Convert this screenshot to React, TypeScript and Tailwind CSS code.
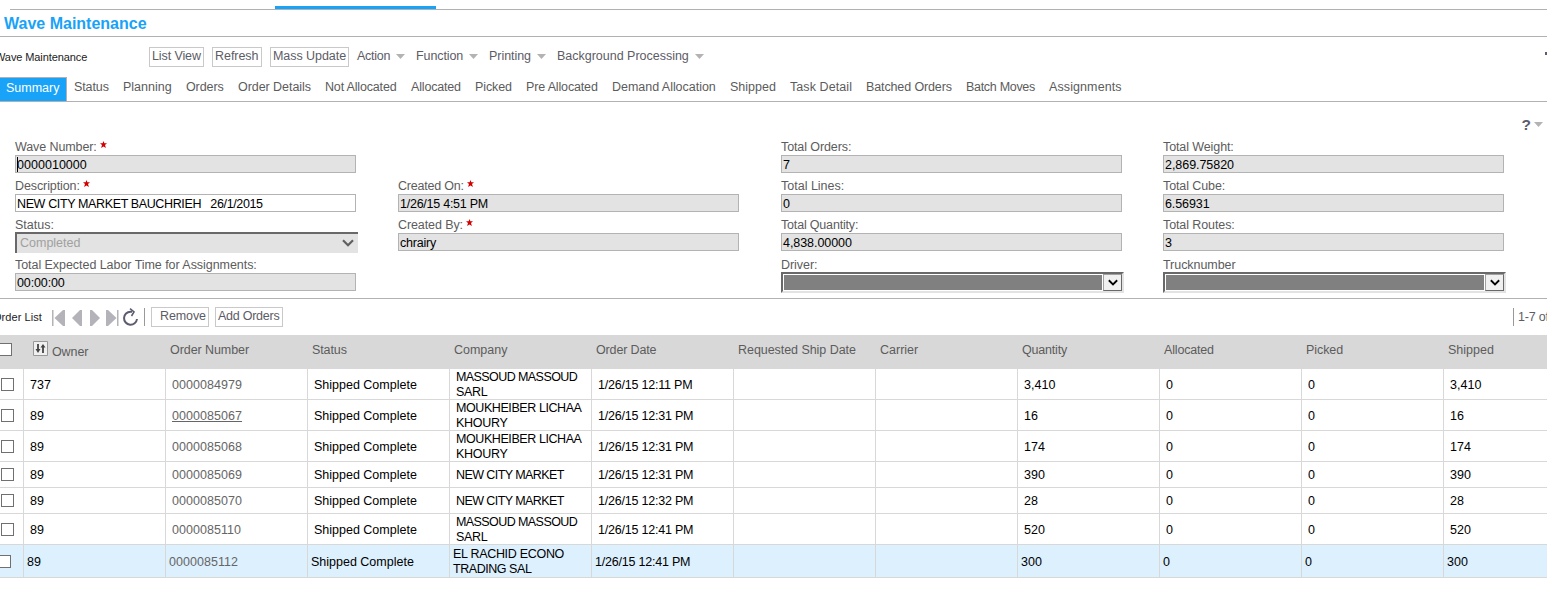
import React from "react";

const tabs: [string, string][] = [
  ["Status", "w-[35px] tracking-[-0.1px]"],
  ["Planning", "w-[49px] tracking-[0px]"],
  ["Orders", "w-[38px] tracking-[-0.1px]"],
  ["Order Details", "w-[73px] tracking-[-0.05px]"],
  ["Not Allocated", "w-[72px] tracking-[-0.17px]"],
  ["Allocated", "w-[50px] tracking-[-0.17px]"],
  ["Picked", "w-[37px] tracking-[-0.1px]"],
  ["Pre Allocated", "w-[72px] tracking-[-0.15px]"],
  ["Demand Allocation", "w-[104px] tracking-[-0.03px]"],
  ["Shipped", "w-[46px] tracking-[0px]"],
  ["Task Detail", "w-[62px] tracking-[0.08px]"],
  ["Batched Orders", "w-[86px] tracking-[-0.12px]"],
  ["Batch Moves", "w-[69px] tracking-[-0.3px]"],
  ["Assignments", "w-[73px] tracking-[0.1px]"],
];

const menus: [string, string][] = [
  ["Action", "w-[59px] tracking-[-0.25px]"],
  ["Function", "w-[73px] tracking-[-0.1px]"],
  ["Printing", "w-[68px] tracking-[-0.05px]"],
  ["Background Processing", "w-[158px] tracking-[-0.01px]"],
];

const columns: [string, string][] = [
  ["Order Number", "tracking-[-0.07px]"],
  ["Status", "tracking-[-0.1px]"],
  ["Company", "tracking-[-0.02px]"],
  ["Order Date", "tracking-[-0.15px]"],
  ["Requested Ship Date", "tracking-[-0.05px]"],
  ["Carrier", "tracking-[0px]"],
  ["Quantity", "tracking-[-0.2px]"],
  ["Allocated", "tracking-[-0.17px]"],
  ["Picked", "tracking-[-0.07px]"],
  ["Shipped", "tracking-[0px]"],
];

type Order = {
  owner: string;
  number: string;
  company: string[];
  date: string;
  qty: string;
  height: string;
  underline?: boolean;
  selected?: boolean;
};

const orders: Order[] = [
  { owner: "737", number: "0000084979", company: ["MASSOUD MASSOUD", "SARL"], date: "1/26/15 12:11 PM", qty: "3,410", height: "h-[31px]" },
  { owner: "89", number: "0000085067", company: ["MOUKHEIBER LICHAA", "KHOURY"], date: "1/26/15 12:31 PM", qty: "16", height: "h-[31px]", underline: true },
  { owner: "89", number: "0000085068", company: ["MOUKHEIBER LICHAA", "KHOURY"], date: "1/26/15 12:31 PM", qty: "174", height: "h-[31px]" },
  { owner: "89", number: "0000085069", company: ["NEW CITY MARKET"], date: "1/26/15 12:31 PM", qty: "390", height: "h-[26px]" },
  { owner: "89", number: "0000085070", company: ["NEW CITY MARKET"], date: "1/26/15 12:32 PM", qty: "28", height: "h-[26px]" },
  { owner: "89", number: "0000085110", company: ["MASSOUD MASSOUD", "SARL"], date: "1/26/15 12:41 PM", qty: "520", height: "h-[31px]" },
  { owner: "89", number: "0000085112", company: ["EL RACHID ECONO", "TRADING SAL"], date: "1/26/15 12:41 PM", qty: "300", height: "h-[33px]", selected: true },
];

function companyTracking(line: string) {
  if (line.startsWith("MOUK")) return "tracking-[-0.42px]";
  if (line.startsWith("MASS") || line.startsWith("NEW")) return "tracking-[-0.58px]";
  if (line.startsWith("TRAD")) return "tracking-[-0.45px]";
  return "tracking-[-0.3px]";
}

function Label({ text, required, className = "" }: { text: string; required?: boolean; className?: string }) {
  return (
    <div className={`flex items-end pb-px leading-[14px] text-[#5c5c5c] ${className || "h-[21px] tracking-[-0.1px]"}`}>
      <span>{text}</span>
      {required && (
        <svg width="7" height="7" viewBox="0 0 7 7" className="mb-[6px] ml-[3px] fill-[#d40000]">
          <path d="M3.500 0 4.400 2.200H7L5 4.100 5.900 7 3.500 5.400 1.100 7 2 4.100 0 2.200h2.600z" />
        </svg>
      )}
    </div>
  );
}

function Field(props: { label: string; value: string; required?: boolean; editable?: boolean; caret?: boolean; valueClass?: string; labelClass?: string }) {
  return (
    <div>
      <Label text={props.label} required={props.required} className={props.labelClass} />
      <div
        className={`flex h-[18px] w-[341px] items-center border border-[#b3b3b3] pl-px leading-[16px] whitespace-pre text-black ${props.editable ? "bg-white" : "bg-[#e3e3e3]"} ${props.valueClass ?? "tracking-[0.03px]"}`}
      >
        {props.caret && <span className="-mr-px h-[15px] w-px bg-black" />}
        <span className="pt-[2px]">{props.value}</span>
      </div>
    </div>
  );
}

function Chevron({ className }: { className: string }) {
  return (
    <svg viewBox="0 0 12 8" fill="none" strokeWidth="2.2" className={className}>
      <path d="M1 1.300 6 6.300 11 1.300" />
    </svg>
  );
}

function DarkSelect({ label }: { label: string }) {
  return (
    <div>
      <Label text={label} className="h-[21px] tracking-[-0.05px]" />
      <div className="-mt-px flex h-[21px] w-[343px] border-2 border-[#696969] border-r-[#e3e3e3] border-b-[#e3e3e3] bg-white">
        <div className="m-px mr-0 mb-0 h-[15px] w-[318px] bg-[#808080]" />
        <div className="ml-px flex h-[17px] w-[19px] items-center justify-center border border-[#a0a0a0] border-r-[#696969] border-b-[#696969] bg-[#f0f0f0]">
          <Chevron className="h-[7px] w-[10px] stroke-black" />
        </div>
      </div>
    </div>
  );
}

function Triangle() {
  return (
    <svg width="9" height="5" viewBox="0 0 9 5" className="fill-[#b3b3b3]">
      <path d="M0 0h9L4.500 5z" />
    </svg>
  );
}

function Button({ text, className }: { text: string; className: string }) {
  return (
    <div className={`h-5 border border-[#c9c9c9] leading-[17px] text-[#5c5c66] ${className}`}>{text}</div>
  );
}

function Checkbox({ className = "" }: { className?: string }) {
  return <div className={`h-[13px] w-[13px] shrink-0 border border-[#707070] bg-white ${className}`} />;
}

function Cell({ children, className = "" }: { children?: React.ReactNode; className?: string }) {
  return (
    <div className={`flex w-[142px] shrink-0 items-center border-r border-[#d8d8d8] pt-[2px] ${className}`}>{children}</div>
  );
}

function OrderRow({ o }: { o: Order }) {
  const pad = o.selected ? "pl-[3px]" : "pl-[6px]";
  const digits = `${pad} tracking-[0.05px]`;
  return (
    <div className={`flex w-[1586px] border-b border-[#d8d8d8] leading-[15px] text-black ${o.height} ${o.selected ? "bg-[#ddf0fe]" : ""}`}>
      <div className="flex w-6 shrink-0 items-center border-r border-[#d8d8d8]">
        <Checkbox className={o.selected ? "-ml-[2px]" : "ml-px"} />
      </div>
      <Cell className={digits}>{o.owner}</Cell>
      <Cell className={digits}>
        <span className={`text-[#666] ${o.underline ? "underline" : ""}`}>{o.number}</span>
      </Cell>
      <Cell className={pad}>Shipped Complete</Cell>
      <Cell className={pad}>
        <div>
          {o.company.map((line) => (
            <div key={line} className={companyTracking(line)}>{line}</div>
          ))}
        </div>
      </Cell>
      <Cell className={`${pad} tracking-[-0.21px]`}>{o.date}</Cell>
      <Cell />
      <Cell />
      <Cell className={digits}>{o.qty}</Cell>
      <Cell className={pad}>0</Cell>
      <Cell className={pad}>0</Cell>
      <Cell className={digits}>{o.qty}</Cell>
    </div>
  );
}

export default function App() {
  return (
    <div className="h-[589px] w-[1547px] overflow-hidden bg-white font-['Liberation_Sans',Arial,sans-serif] text-[12.5px] whitespace-nowrap">
      <div className="ml-[10px] flex h-[10px] items-end border-b border-[#b1b1b1]">
        <div className="ml-[265px] h-[3px] w-[161px] bg-[#18a2f8]" />
      </div>
      <div className="h-[27px] border-b border-[#b1b1b1] pl-1 text-[16px] leading-[27px] font-bold text-[#18a2f8]">
        Wave Maintenance
      </div>

      <div className="flex h-10 pt-[10px] text-[#5c5c66]">
        <div className="-ml-[5px] w-[154px] pt-[2px] text-[11px] leading-[17px] tracking-[-0.1px] text-[#222]">Wave Maintenance</div>
        <Button text="List View" className="w-[55px] pl-[2px] tracking-[-0.1px]" />
        <Button text="Refresh" className="ml-2 w-[50px] pl-[2px] tracking-[-0.05px]" />
        <Button text="Mass Update" className="ml-2 w-[79px] pl-[2px] tracking-[-0.05px]" />
        <div className="ml-2 flex h-[18px] items-center">
          {menus.map(([name, cls]) => (
            <div key={name} className={`flex items-center justify-between pr-[11px] ${cls}`}>
              <span>{name}</span>
              <Triangle />
            </div>
          ))}
        </div>
        <div className="mt-[5px] ml-auto h-[3px] w-[2px] bg-[#5c5c70]" />
      </div>

      <div className="flex h-[25px] border-b border-[#b1b1b1]">
        <div className="h-6 w-[67px] border-t border-r border-[#b1b1b1] bg-[#18a2f8] pl-[6px] leading-[20px] text-white">
          Summary
        </div>
        <div className="ml-[7px] flex gap-[14px] leading-5 text-[#5c5c5c]">
          {tabs.map(([name, cls]) => (
            <div key={name} className={cls}>{name}</div>
          ))}
        </div>
      </div>

      <div className="flex h-8 items-start justify-end pt-[14px] pr-1">
        <span className="text-[15.5px] leading-[18px] font-bold text-[#5c5c70]">?</span>
        <span className="mt-[6px] ml-[3px] flex"><Triangle /></span>
      </div>

      <div className="flex h-[165px] border-b border-[#b1b1b1] pl-[15px]">
        <div className="w-[383px]">
          <Field label="Wave Number:" value="0000010000" required caret />
          <Field label="Description:" value="NEW CITY MARKET BAUCHRIEH   26/1/2015" required editable valueClass="tracking-[-0.37px]" />
          <Label text="Status:" className="h-[21px]" />
          <div className="-mt-px flex h-[21px] w-[343px] items-center justify-between border-t-2 border-l-2 border-[#696969] bg-[#e3e3e3] pr-[4px] pb-px pl-[3px] text-[#a0a0a0]">
            <span>Completed</span>
            <Chevron className="h-[8px] w-[12px] stroke-[#606060]" />
          </div>
          <Field
            label="Total Expected Labor Time for Assignments:"
            value="00:00:00"
            labelClass="h-[20px] tracking-[-0.05px]"
            valueClass="tracking-[-0.12px]"
          />
        </div>
        <div className="w-[383px] pt-[39px]">
          <Field label="Created On:" value="1/26/15 4:51 PM" required labelClass="h-[21px] tracking-[-0.2px]" valueClass="tracking-[-0.25px]" />
          <Field label="Created By:" value="chrairy" required valueClass="tracking-[-0.2px]" />
        </div>
        <div className="w-[382px]">
          <Field label="Total Orders:" value="7" />
          <Field label="Total Lines:" value="0" labelClass="h-[21px]" />
          <Field label="Total Quantity:" value="4,838.00000" labelClass="h-[21px] tracking-[-0.18px]" valueClass="tracking-[-0.06px]" />
          <div className="h-px" />
          <DarkSelect label="Driver:" />
        </div>
        <div>
          <Field label="Total Weight:" value="2,869.75820" valueClass="tracking-[-0.05px]" />
          <Field label="Total Cube:" value="6.56931" valueClass="tracking-[-0.1px]" />
          <Field label="Total Routes:" value="3" />
          <div className="h-px" />
          <DarkSelect label="Trucknumber" />
        </div>
      </div>

      <div className="flex h-9 pt-2">
        <div className="-ml-[7px] w-[59px] pt-[2px] text-[11px] leading-[17px] tracking-[0.05px] text-[#222]">Order List</div>
        <svg width="92" height="22" viewBox="0 0 92 22" className="shrink-0">
          <g fill="#b3b3b9">
            <path d="M0 3h1.500v16H0zM13 3v16h-2L2.500 11 11 3zM30 3v16h-2L20 11 28 3zM38 3h2l8 8-8 8h-2zM54 3h2l8.500 8-8.500 8h-2zM65 3h1.500v16H65z" />
          </g>
          <path d="M80 4.700h-1.500a6.500 6.500 0 1 0 6.500 7.300" fill="none" stroke="#5c5c70" strokeWidth="2" />
          <path d="M78 1.700 82 4.900 79.500 9" fill="none" stroke="#5c5c70" strokeWidth="1.600" />
        </svg>
        <div className="mt-[1px] h-[18px] w-px bg-[#999]" />
        <Button text="Remove" className="ml-[6px] w-[58px] pl-[8px] tracking-[-0.1px]" />
        <Button text="Add Orders" className="ml-[6px] w-[68px] pl-[2px] tracking-[-0.25px]" />
        <div className="mt-[1px] ml-auto h-[18px] w-[34px] overflow-hidden border-l border-[#999] pl-[4px] leading-[19px] tracking-[-0.2px] text-[#5c5c66]">
          1-7 of 7
        </div>
      </div>

      <div className="flex h-[34px] bg-[#d8d8d8] leading-[30px] text-[#5c5c5c]">
        <div className="w-6 shrink-0 pt-2">
          <Checkbox className="-ml-px" />
        </div>
        <div className="flex w-[142px] shrink-0 pl-[9px]">
          <svg width="15" height="15" viewBox="0 0 15 15" className="mt-[6px]">
            <path d="M.5.500h14v14H.500z" fill="#f0f0f0" stroke="#999" />
            <path d="M5 3v7M10 5v7" stroke="#444" strokeWidth="1.800" />
            <path d="M2.500 8h5L5 12zM7.500 6.500h5L10 3z" fill="#444" />
          </svg>
          <span className="ml-1 pt-[2px] tracking-[-0.1px]">Owner</span>
        </div>
        {columns.map(([name, cls]) => (
          <div key={name} className={`w-[142px] shrink-0 pl-1 ${cls}`}>{name}</div>
        ))}
      </div>
      {orders.map((o) => (
        <OrderRow key={o.number} o={o} />
      ))}
    </div>
  );
}
